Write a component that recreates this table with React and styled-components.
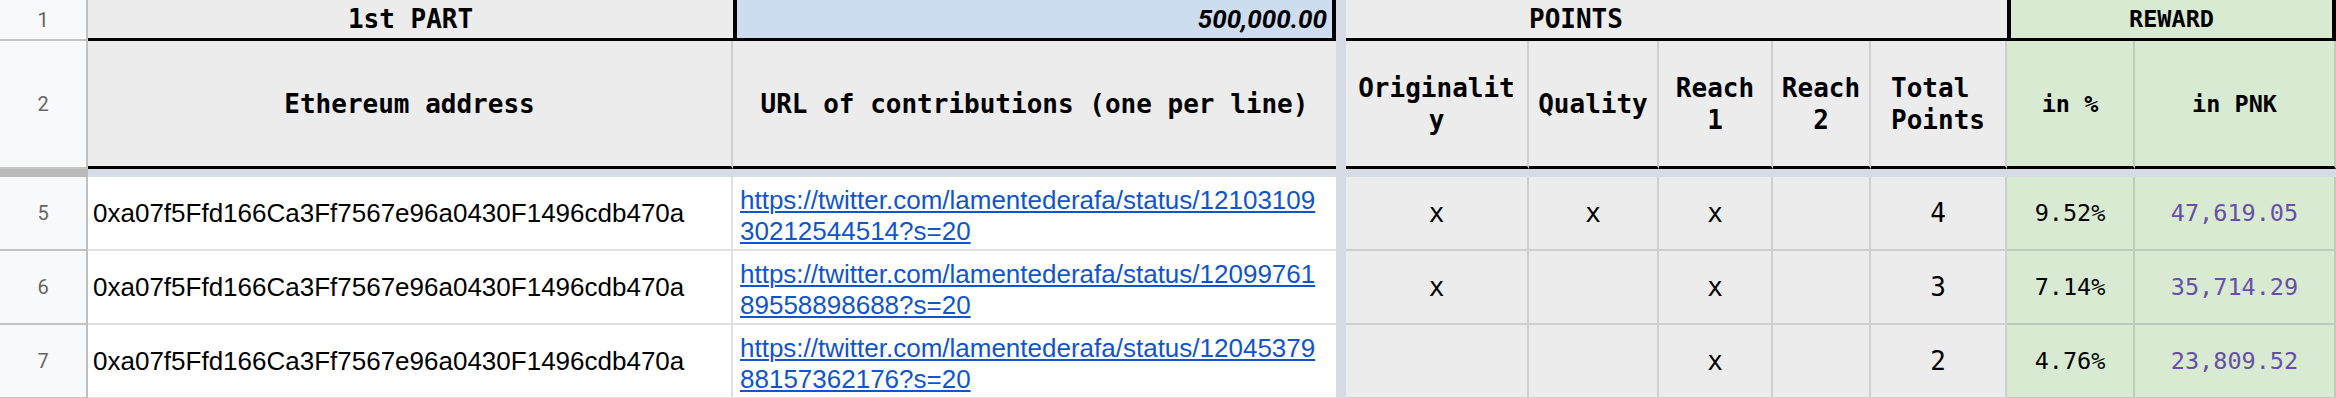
import React from 'react';
import styled, { createGlobalStyle } from 'styled-components';

const mono = `"DejaVu Sans Mono", "Liberation Mono", monospace`;
const sans = `"Liberation Sans", Arial, sans-serif`;

const tones = {
  white: '#ffffff',
  gray: '#ececec',
  blue: '#cddcee',
  green: '#d9ead3',
};

const GRID = '2px solid rgba(0, 0, 0, 0.12)';
const THICK_H = '3px solid #000000';
const THICK_V = '4px solid #000000';

const edge = (kind, thick) => {
  if (kind === 'thick') return thick;
  if (kind === 'none') return 'none';
  return GRID;
};

const GlobalStyle = createGlobalStyle`
  html, body {
    margin: 0;
    padding: 0;
    background: #ffffff;
    overflow: hidden;
  }
`;

const Sheet = styled.div`
  display: grid;
  grid-template-columns: 88px 645px 603px 10px 183px 130px 114px 98px 136px 128px 201px;
  grid-template-rows: 41px 128px 8px 74px 74px 74px;
  width: 2336px;
`;

const RowHead = styled.div`
  box-sizing: border-box;
  display: flex;
  align-items: center;
  justify-content: center;
  background: #f8f9fa;
  border-right: 2px solid #c0c0c0;
  border-bottom: 2px solid #c4c4c4;
  font-family: Roboto, sans-serif;
  font-size: 20px;
  color: #666666;
`;

const RowHeadBand = styled.div`
  background: #b9b9b9;
`;

const FreezeBand = styled.div`
  grid-column: 2 / -1;
  background: #d6dbe5;
`;

const FreezeColumn = styled.div`
  background: #d6dbe5;
`;

const Cell = styled.div`
  box-sizing: border-box;
  grid-column: span ${(p) => p.$span || 1};
  display: flex;
  flex-direction: column;
  justify-content: ${(p) => (p.$valign === 'bottom' ? 'flex-end' : 'center')};
  align-items: ${(p) =>
    p.$align === 'left' ? 'flex-start' : p.$align === 'right' ? 'flex-end' : 'center'};
  text-align: ${(p) => p.$align || 'center'};
  padding: ${(p) => p.$pad || '0'};
  background: ${(p) => tones[p.$tone || 'white']};
  border-left: ${(p) => (p.$left === 'thick' ? THICK_V : 'none')};
  border-right: ${(p) => edge(p.$right, THICK_V)};
  border-bottom: ${(p) => edge(p.$bottom, THICK_H)};
  overflow: hidden;
  white-space: nowrap;
`;

const HeadLabel = styled.span`
  font-family: ${mono};
  font-weight: 700;
  font-size: ${(p) => (p.$small ? '23.5px' : '26px')};
  line-height: 32px;
  color: #000000;
`;

const Budget = styled.span`
  font-family: Roboto, ${sans};
  font-weight: 700;
  font-style: italic;
  font-size: 26px;
  color: #000000;
`;

const Address = styled.span`
  font-family: ${sans};
  font-size: 26px;
  color: #000000;
`;

const UrlLink = styled.a`
  font-family: ${sans};
  font-size: 26px;
  line-height: 31px;
  color: #1155cc;
  text-decoration: underline;
  text-decoration-thickness: 2px;
  text-underline-offset: 2px;
`;

const Mark = styled.span`
  font-family: ${mono};
  font-size: 26px;
  color: #000000;
`;

const Share = styled.span`
  font-family: ${mono};
  font-size: 23.5px;
  color: ${(p) => (p.$purple ? '#674ea7' : '#000000')};
`;

const entries = [
  {
    n: 5,
    address: '0xa07f5Ffd166Ca3Ff7567e96a0430F1496cdb470a',
    url: ['https://twitter.com/lamentederafa/status/12103109', '30212544514?s=20'],
    marks: ['x', 'x', 'x', ''],
    total: 4,
    pct: '9.52%',
    pnk: '47,619.05',
  },
  {
    n: 6,
    address: '0xa07f5Ffd166Ca3Ff7567e96a0430F1496cdb470a',
    url: ['https://twitter.com/lamentederafa/status/12099761', '89558898688?s=20'],
    marks: ['x', '', 'x', ''],
    total: 3,
    pct: '7.14%',
    pnk: '35,714.29',
  },
  {
    n: 7,
    address: '0xa07f5Ffd166Ca3Ff7567e96a0430F1496cdb470a',
    url: ['https://twitter.com/lamentederafa/status/12045379', '88157362176?s=20'],
    marks: ['', '', 'x', ''],
    total: 2,
    pct: '4.76%',
    pnk: '23,809.52',
  },
];

const pointHeads = [
  ['Originalit', 'y'],
  ['Quality'],
  ['Reach', '1'],
  ['Reach', '2'],
  ['Total\u00a0', 'Points'],
];

const Lines = ({ lines }) =>
  lines.map((line, i) => (
    <React.Fragment key={i}>
      {i > 0 && <br />}
      {line}
    </React.Fragment>
  ));

const App = () => {
  return (
    <>
      <GlobalStyle />
      <Sheet>
        {/* row 1 */}
        <RowHead>1</RowHead>
        <Cell $tone="gray" $right="none" $bottom="thick">
          <HeadLabel>1st PART</HeadLabel>
        </Cell>
        <Cell $tone="blue" $left="thick" $right="thick" $bottom="thick" $align="right" $pad="0 5px 0 0">
          <Budget>500,000.00</Budget>
        </Cell>
        <FreezeColumn />
        <Cell $tone="gray" $right="none" $bottom="thick" />
        <Cell $tone="gray" $span={4} $right="none" $bottom="thick" $align="left">
          <HeadLabel>POINTS</HeadLabel>
        </Cell>
        <Cell $tone="green" $span={2} $left="thick" $right="thick" $bottom="thick">
          <HeadLabel $small>REWARD</HeadLabel>
        </Cell>

        {/* row 2 */}
        <RowHead>2</RowHead>
        <Cell $tone="gray" $bottom="thick">
          <HeadLabel>Ethereum address</HeadLabel>
        </Cell>
        <Cell $tone="gray" $right="none" $bottom="thick">
          <HeadLabel>URL of contributions (one per line)</HeadLabel>
        </Cell>
        <FreezeColumn />
        {pointHeads.map((lines, i) => (
          <Cell key={i} $tone="gray" $bottom="thick">
            <HeadLabel>
              <Lines lines={lines} />
            </HeadLabel>
          </Cell>
        ))}
        <Cell $tone="green" $bottom="thick">
          <HeadLabel $small>in %</HeadLabel>
        </Cell>
        <Cell $tone="green" $bottom="thick">
          <HeadLabel $small>in PNK</HeadLabel>
        </Cell>

        {/* frozen divider */}
        <RowHeadBand />
        <FreezeBand />

        {entries.map((row) => (
          <React.Fragment key={row.n}>
            <RowHead>{row.n}</RowHead>
            <Cell $align="left" $pad="0 5px">
              <Address>{row.address}</Address>
            </Cell>
            <Cell $align="left" $valign="bottom" $pad="0 7px 2px" $right="none">
              <UrlLink href={row.url.join('')}>
                <Lines lines={row.url} />
              </UrlLink>
            </Cell>
            <FreezeColumn />
            {row.marks.map((m, i) => (
              <Cell key={i} $tone="gray">
                <Mark>{m}</Mark>
              </Cell>
            ))}
            <Cell $tone="gray">
              <Mark>{row.total}</Mark>
            </Cell>
            <Cell $tone="green">
              <Share>{row.pct}</Share>
            </Cell>
            <Cell $tone="green">
              <Share $purple>{row.pnk}</Share>
            </Cell>
          </React.Fragment>
        ))}
      </Sheet>
    </>
  );
};

export default App;
